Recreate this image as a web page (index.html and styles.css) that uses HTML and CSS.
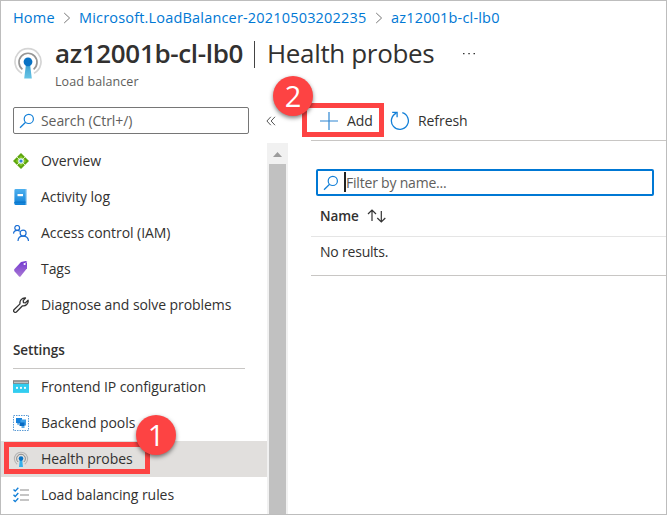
FILE: index.html
```html
<!DOCTYPE html>
<html lang="en">
<head>
<meta charset="utf-8">
<title>az12001b-cl-lb0 | Health probes</title>
<link rel="stylesheet" href="styles.css">
</head>
<body>
<svg class="defs" width="0" height="0">
  <defs>
    <linearGradient id="beam" x1="0" y1="0" x2="0" y2="1"><stop offset="0" stop-color="#3c9fd0"/><stop offset="1" stop-color="#68c5e6"/></linearGradient>
    <linearGradient id="book" x1="0" y1="0" x2="0" y2="1"><stop offset="0" stop-color="#4eb0ef"/><stop offset="1" stop-color="#0f80d7"/></linearGradient>
    <linearGradient id="tag" x1="0" y1="0" x2="0" y2="1"><stop offset="0" stop-color="#7137d0"/><stop offset="1" stop-color="#aa79d4"/></linearGradient>
    <symbol id="probe" viewBox="0 0 28 32">
      <path d="M8 26.2a13 13 0 1 1 12 0" fill="none" stroke="#d5d5d5" stroke-width="1.7"/>
      <path d="M8.4 22.3a9 9 0 1 1 11.2 0" fill="none" stroke="#969696" stroke-width="1.7"/>
      <path d="M12 17h4l1.8 14.5h-7.6z" fill="url(#beam)"/>
      <circle cx="14" cy="14.8" r="4.4" fill="#0872c4"/>
    </symbol>
    <symbol id="lens" viewBox="0 0 16 16">
      <circle cx="9.8" cy="5.9" r="4.6" fill="none" stroke="#1480d8" stroke-width="1.2"/>
      <path d="M6.6 9.2 1 14.7" stroke="#1480d8" stroke-width="1.3"/>
    </symbol>
    <symbol id="chevron" viewBox="0 0 8 12"><path d="m1.2 1 5.4 5-5.4 5" fill="none" stroke="#777" stroke-width="1"/></symbol>
  </defs>
</svg>
<div class="window">
  <nav class="crumbs">
    <a class="home">Home</a><svg class="chev"><use href="#chevron"/></svg><a class="deploy">Microsoft.LoadBalancer-20210503202235</a><svg class="chev"><use href="#chevron"/></svg><a class="leaf">az12001b-cl-lb0</a>
  </nav>
  <header class="heading">
    <svg class="logo"><use href="#probe"/></svg>
    <div>
      <h1><strong>az12001b-cl-lb0</strong><i class="bar"></i><span>Health probes</span><svg class="more" viewBox="0 0 14 2"><path d="M1 .5h1.5M6.3.5h1.5M11.5.5H13" stroke="#333" stroke-width="1.4"/></svg></h1>
      <p>Load balancer</p>
    </div>
  </header>
  <div class="body">
    <aside>
      <div class="searchrow">
        <div class="search"><svg class="ico"><use href="#lens"/></svg><span>Search (Ctrl+/)</span></div>
        <svg class="collapse" viewBox="0 0 10 10"><path d="M4.8.8.9 5l3.9 4.2M9 .8 5.1 5 9 9.2" fill="none" stroke="#555"/></svg>
      </div>
      <div class="menuwrap">
        <div class="menu">
          <div class="item"><svg class="ico" viewBox="0 0 16 16"><path d="M8 0 16 8 8 16 0 8z" fill="#5ea60f"/><path d="M8 2.8 13.2 8 8 13.2 2.8 8z" fill="#86c92b"/><path d="m4 4 2.5 2.5M12 4 9.5 6.5M4 12l2.5-2.5M12 12 9.5 9.5" stroke="#d9efbd" stroke-width="1"/><circle cx="8" cy="8" r="2.8" fill="#e4f3ff"/><circle cx="8" cy="8" r="1.6" fill="#3384d6"/></svg><span>Overview</span></div>
          <div class="item"><svg class="ico" viewBox="0 0 16 16"><path d="M2.7 0h11v16h-11a1.3 1.3 0 0 1-1.3-1.3V1.3A1.3 1.3 0 0 1 2.7 0z" fill="url(#book)"/><path d="M12.7 0h1.1v16h-1.1z" fill="#b8dcf5"/><path d="M1.4 14.2c0-1 .7-1.1 1.6-1.1h9.7" fill="none" stroke="#0873c8"/><path d="M4.5 5h5.5v2.2H4.5z" fill="#fff"/></svg><span>Activity log</span></div>
          <div class="item"><svg class="ico" viewBox="0 0 16 16" fill="none" stroke="#1b6fd5" stroke-width="1.2"><circle cx="4.2" cy="2.9" r="2.4"/><path d="M.5 8.6c.2-2.1 1.7-3.3 3.7-3.3 1.1 0 2 .4 2.7 1.1"/><circle cx="10.1" cy="8.1" r="3"/><path d="M5 16c.1-3 2.2-4.9 5-4.9 3 0 5.3 1.9 5.5 4.9"/></svg><span>Access control (IAM)</span></div>
          <div class="item"><svg class="ico" viewBox="0 0 16 16"><path d="M8 .9 13 0l1 .8v6.4L7.3 15.7l-1 .1L1.2 10 1.3 8.2z" fill="url(#tag)"/><circle cx="11.6" cy="3" r="1.1" fill="#fff"/><path d="m12 3 1.8-2.5" stroke="#c9a9ea"/></svg><span>Tags</span></div>
          <div class="item"><svg class="ico" viewBox="0 0 16 16"><path d="M1 12.7 7 6.9C6.4 3.8 8.9.7 12.5 1L10.2 3.6l.3 2 2 .2 2.6-2.5c.5 3.4-2.4 6.1-5.6 5.5L3.4 15c-1.6 1.2-3.7-.8-2.4-2.3z" fill="none" stroke="#333" stroke-width="1.3" stroke-linejoin="round"/></svg><span>Diagnose and solve problems</span></div>
          <div class="section"><span>Settings</span></div>
          <div class="item"><svg class="ico" viewBox="0 0 16 16"><path d="M0 1.2h16V5H0z" fill="#858585"/><path d="M1 2.8h14v.9H1z" fill="#ddd"/><path d="M0 4.8h16v9.1H0z" fill="#32cdf0"/><g fill="#fff"><circle cx="4" cy="8.9" r="1.05"/><circle cx="8" cy="8.9" r="1.05"/><circle cx="12" cy="8.9" r="1.05"/></g></svg><span>Frontend IP configuration</span></div>
          <div class="item"><svg class="ico" viewBox="0 0 16 16"><path d="M.5.5h15v15H.5z" fill="none" stroke="#5b9bd5" stroke-dasharray="1.5 1"/><path d="M3 3h6v5H3z" fill="#1681dc"/><path d="M7.5 4.5H13v6H7.5z" fill="#3b9fe8"/><path d="M6.5 7.5h5v3.5h-5z" fill="#086bc3"/><path d="M4.2 8.1h2.2v1.7H4.2zM8.5 11h3v2h-3z" fill="#5eabe5"/></svg><span>Backend pools</span></div>
          <div class="item selected"><svg class="ico" viewBox="0 0 16 16"><path d="M4.2 13.2a6.6 6.6 0 1 1 7.6 0" fill="none" stroke="#b5b5b5" stroke-width="1.1"/><path d="M5.2 11a4.4 4.4 0 1 1 5.6 0" fill="none" stroke="#888" stroke-width="1"/><path d="M6.9 8h2.2l.9 8H6z" fill="#35b0ea"/><circle cx="8" cy="7.6" r="2.3" fill="#0872c4"/></svg><span>Health probes</span></div>
          <div class="item"><svg class="ico" viewBox="0 0 16 16" fill="none"><path d="M7 3h9M7 8h9M7 13h9" stroke="#8b8b8b" stroke-width="1.2"/><path d="m.5 2.4 1.7 1.7L5.3.7M.5 7.7l1.7 1.7L5.3 6M.5 12.9l1.7 1.7 3.1-3.4" stroke="#1480d8" stroke-width="1.4"/></svg><span>Load balancing rules</span></div>
        </div>
        <div class="scroll"><i class="up"></i><i class="thumb"></i></div>
      </div>
    </aside>
    <main>
      <div class="toolbar">
        <svg class="plus" viewBox="0 0 18 18"><path d="M9 0v18M0 9h18" stroke="#2e86d2" stroke-width="1.2"/></svg><span class="add">Add</span>
        <svg class="refresh" viewBox="0 0 20 20"><path d="M12.3 1.7A8.5 8.5 0 1 1 6.4 2.1" fill="none" stroke="#1480d8" stroke-width="1.3"/><path d="M2.2 1.3h4.9v4.9" fill="none" stroke="#1480d8" stroke-width="1.3"/></svg><span class="ref">Refresh</span>
      </div>
      <div class="filter"><svg class="ico"><use href="#lens"/></svg><i class="caret"></i><span>Filter by name...</span></div>
      <div class="thead"><span>Name</span><svg class="sort" viewBox="0 0 20 14" fill="none" stroke="#333" stroke-width="1.2"><path d="M5 12V1M1 5l4-4 4 4M14.3 2v11M10.3 9l4 4 4-4"/></svg></div>
      <div class="empty"><span>No results.</span></div>
    </main>
  </div>
  <i class="frame frame1"></i><i class="frame frame2"></i>
  <b class="badge badge1">1</b><b class="badge badge2">2</b>
</div>
</body>
</html>
```

FILE: styles.css
```css
* { box-sizing: border-box; }
body { margin: 0; font: 14px/20px "Open Sans", "Noto Sans", sans-serif; letter-spacing: -.07px; color: #323130; }
.defs { position: absolute; }
svg { flex: none; display: block; }
i { display: block; }
span, a, strong { white-space: nowrap; }
.window { position: relative; display: flex; flex-direction: column; width: 667px; height: 515px; border: 1px solid #bdbdbd; background: #fff; overflow: hidden; }
.crumbs { display: flex; align-items: center; height: 34px; padding-left: 12px; font-size: 14.5px; letter-spacing: .18px; color: #0078d4; }
.chev { width: 8px; height: 12px; margin: 0 8px; }
.home { width: 42px; }
.deploy { width: 288px; }
.heading { display: flex; height: 61px; padding-left: 13px; }
.logo { width: 28px; height: 32px; margin-top: 12px; }
.heading > div { padding-left: 13px; }
h1 { display: flex; align-items: center; margin: 0; height: 36px; font-size: 26px; font-weight: 400; line-height: 36px; letter-spacing: -.35px; }
h1 strong { width: 188px; font-weight: 600; }
.bar { width: 1px; height: 27px; margin: 3px 12px 0 11px; background: #444; }
h1 span { width: 166px; }
.more { width: 14px; height: 2px; margin: 2px 0 0 29px; }
p { margin: 1px 0 0; font-size: 12.5px; line-height: 20px; letter-spacing: .1px; color: #605e5c; }
.body { display: flex; flex: 1; min-height: 0; }
aside { display: flex; flex-direction: column; width: 287px; }
.searchrow { display: flex; align-items: center; height: 47px; padding: 2px 0 0 12px; }
.search { display: flex; align-items: center; width: 236px; height: 27px; padding-left: 5px; border: 1px solid #767676; border-radius: 2px; color: #605e5c; }
.search span { margin-left: 6px; }
.collapse { width: 10px; height: 10px; margin: 1px 0 0 17px; }
.ico { width: 16px; height: 16px; }
.menuwrap { display: flex; flex: 1; min-height: 0; }
.menu { width: 266px; }
.item { display: flex; align-items: center; height: 36px; padding-left: 12px; gap: 12px; }
.selected { background: #e1dfdd; }
.section { height: 46px; margin: 0 22px 0 12px; padding-top: 17px; border-bottom: 1px solid #c8c6c4; font-weight: 600; font-size: 13.5px; }
.scroll { display: flex; flex-direction: column; align-items: center; width: 21px; background: #f1f1f1; }
.up { width: 9px; height: 5px; margin: 9px 0 7px; background: #9c9c9c; clip-path: polygon(50% 0, 100% 100%, 0 100%); }
.thumb { width: 17px; flex: 1; background: #c1c1c1; }
main { flex: 1; padding-left: 23px; }
.toolbar { display: flex; align-items: center; height: 45px; padding: 6px 0 0 9px; border-bottom: 1px solid #c8c6c4; }
.toolbar + .filter { margin-top: 28px; }
.plus { width: 18px; height: 18px; }
.add { width: 28px; margin-left: 9px; }
.refresh { width: 20px; height: 20px; margin-left: 15px; }
.ref { margin-left: 8px; }
.filter { display: flex; align-items: center; width: 338px; height: 27px; margin-left: 5px; padding-left: 5px; border: 2px solid #0078d4; border-radius: 2px; color: #605e5c; letter-spacing: -.2px; }
.caret { width: 2px; height: 20px; margin: -2px 0 0 5px; background: #222; }
.thead { display: flex; align-items: center; height: 41px; padding-left: 9px; border-bottom: 1px solid #e5e5e5; font-weight: 600; font-size: 13.5px; }
.thead span { width: 39px; }
.sort { width: 20px; height: 14px; margin-left: 8px; }
.empty { height: 39px; padding: 5px 0 0 9px; border-bottom: 1px solid #c8c6c4; letter-spacing: -.2px; }
.frame { position: absolute; border: 5px solid #fd4343; }
.frame1 { left: 3px; top: 441px; width: 146px; height: 32px; }
.frame2 { left: 301px; top: 102px; width: 82px; height: 34px; }
.badge { position: absolute; width: 40px; height: 40px; border-radius: 50%; background: #fd4343; color: #fff; font: 400 29px/40px "Open Sans", sans-serif; text-align: center; box-shadow: 0 2px 4px rgba(0,0,0,.5); }
.badge1 { left: 135px; top: 414px; }
.badge2 { left: 272px; top: 75px; }
```
